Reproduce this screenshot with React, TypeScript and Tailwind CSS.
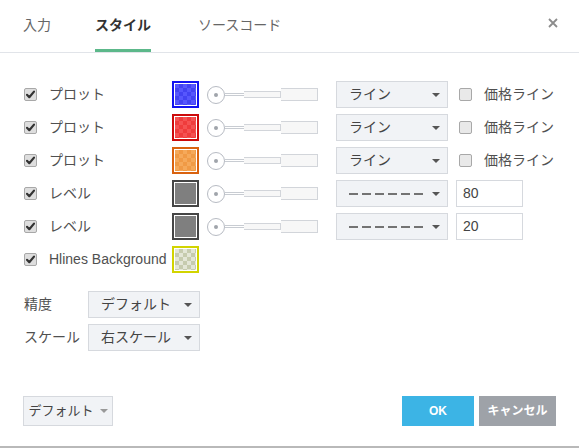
import React from "react";

const FONT = "font-['Liberation_Sans','Noto_Sans_CJK_JP',sans-serif]";

type Row = {
  label: string;
  swatch: string;
  kind: "plot" | "level";
  value?: string;
};

const rows: Row[] = [
  {
    label: "プロット",
    kind: "plot",
    swatch:
      "border-[#1212f0] bg-[conic-gradient(#4343f2_25%,#5757fd_0_50%,#4343f2_0_75%,#5757fd_0)]",
  },
  {
    label: "プロット",
    kind: "plot",
    swatch:
      "border-[#cc0a0a] bg-[conic-gradient(#ef3c3c_25%,#f55252_0_50%,#ef3c3c_0_75%,#f55252_0)]",
  },
  {
    label: "プロット",
    kind: "plot",
    swatch:
      "border-[#d9620f] bg-[conic-gradient(#f09a45_25%,#f5a95a_0_50%,#f09a45_0_75%,#f5a95a_0)]",
  },
  { label: "レベル", kind: "level", value: "80", swatch: "border-[#454545] bg-[#7f7f7f]" },
  { label: "レベル", kind: "level", value: "20", swatch: "border-[#454545] bg-[#7f7f7f]" },
];

function Checkbox({ checked }: { checked: boolean }) {
  return (
    <div
      className={`w-[13px] h-[13px] shrink-0 rounded-[2px] border border-[#a8a8a8] flex items-center justify-center ${
        checked ? "bg-[#dedede]" : "bg-[#e9e9e9]"
      }`}
    >
      {checked && (
        <svg width="9" height="9" viewBox="0 0 9 9">
          <path d="M1 4.8 L3.3 7.2 L8 1.6" fill="none" stroke="#333" strokeWidth="2.2" strokeLinecap="round" strokeLinejoin="round" />
        </svg>
      )}
    </div>
  );
}

function Swatch({ cls }: { cls: string }) {
  return (
    <div className={`w-[27px] h-[27px] shrink-0 border-2 p-px bg-white ${cls.split(" ")[0]}`}>
      <div className={`w-full h-full bg-[length:8px_8px] ${cls.split(" ").slice(1).join(" ")}`} />
    </div>
  );
}

function Slider() {
  return (
    <div className="flex items-center w-[111px] shrink-0">
      <div className="w-[18px] h-[18px] shrink-0 rounded-full border border-[#b7bbc3] bg-white flex items-center justify-center">
        <div className="w-[4px] h-[4px] rounded-full bg-[#a0a4ab]" />
      </div>
      <div className="w-[19px] shrink-0 h-[3px] border-y border-[#c8ccd2] bg-white" />
      <div className="w-[37px] shrink-0 h-[7px] border border-l-0 border-[#d2d5da] bg-[#f7f7f7]" />
      <div className="w-[37px] shrink-0 h-[13px] border border-l-0 border-[#d2d5da] bg-[#f7f7f7]" />
    </div>
  );
}

function Caret({ color = "border-t-[#555]" }: { color?: string }) {
  return <div className={`w-0 h-0 border-x-[4px] border-x-transparent border-t-[4px] ${color}`} />;
}

function Select({ children, w = "w-[112px]" }: { children: React.ReactNode; w?: string }) {
  return (
    <div
      className={`${w} h-[27px] shrink-0 bg-[#f1f3f6] border border-[#d6d9de] flex items-center justify-between pl-[12px] pr-[7px] text-[14px] text-[#444]`}
    >
      {children}
      <Caret />
    </div>
  );
}

function Dashes() {
  return (
    <div className="flex gap-[4px]">
      {[0, 1, 2, 3, 4, 5].map((i) => (
        <span key={i} className="w-[9px] h-[2px] bg-[#737373]" />
      ))}
    </div>
  );
}

export default function App() {
  return (
    <div className={`w-[579px] h-[448px] bg-white flex flex-col ${FONT} text-[#505050] border-b-2 border-[#b9b9b9]`}>
      {/* header tabs */}
      <div className="h-[53px] shrink-0 flex items-stretch border-b border-[#e1e4e9] pl-[23px] pr-[21px] text-[14px]">
        <div className="flex items-center pt-[1px] border-b-[3px] border-transparent text-[#666]">入力</div>
        <div className="flex items-center pt-[1px] ml-[44px] border-b-[3px] border-[#5cb88a] font-bold text-[#333]">
          スタイル
        </div>
        <div className="flex items-center pt-[1px] ml-[47px] border-b-[3px] border-transparent text-[#666]">
          ソースコード
        </div>
        <div className="ml-auto flex items-center pb-[7px]">
          <svg width="10" height="10" viewBox="0 0 10 10">
            <path d="M1 1 L9 9 M9 1 L1 9" stroke="#8c8c8c" strokeWidth="1.8" />
          </svg>
        </div>
      </div>

      {/* rows */}
      <div className="pt-[28px] pl-[24px] flex flex-col gap-[6px] text-[14px]">
        {rows.map((r, i) => (
          <div key={i} className="h-[27px] flex items-center">
            <Checkbox checked />
            <div className="ml-[12px] w-[123px] whitespace-nowrap">{r.label}</div>
            <Swatch cls={r.swatch} />
            <div className="ml-[8px]">
              <Slider />
            </div>
            <div className="ml-[18px]">
              <Select>{r.kind === "plot" ? <span>ライン</span> : <Dashes />}</Select>
            </div>
            {r.kind === "plot" ? (
              <div className="ml-[11px] flex items-center">
                <Checkbox checked={false} />
                <span className="ml-[12px] whitespace-nowrap">価格ライン</span>
              </div>
            ) : (
              <div className="ml-[8px] w-[67px] h-[27px] border border-[#d6d9de] bg-white flex items-center pl-[6px] text-[#444]">
                {r.value}
              </div>
            )}
          </div>
        ))}
        <div className="h-[27px] flex items-center">
          <Checkbox checked />
          <div className="ml-[12px] w-[123px] whitespace-nowrap">Hlines Background</div>
          <Swatch cls="border-[#d2d400] bg-[conic-gradient(#c6cbae_25%,#e3e6d6_0_50%,#c6cbae_0_75%,#e3e6d6_0)]" />
        </div>

        <div className="mt-[12px] h-[27px] flex items-center">
          <div className="w-[64px]">精度</div>
          <Select>
            <span>デフォルト</span>
          </Select>
        </div>
        <div className="h-[27px] flex items-center">
          <div className="w-[64px] whitespace-nowrap">スケール</div>
          <Select>
            <span>右スケール</span>
          </Select>
        </div>
      </div>

      {/* footer */}
      <div className="mt-auto mb-[20px] px-[23px] flex items-center">
        <div className="w-[90px] h-[30px] bg-[#f1f3f6] border border-[#d6d9de] flex items-center justify-center gap-[6px] text-[13px] text-[#444]">
          <span>デフォルト</span>
          <Caret color="border-t-[#999]" />
        </div>
        <div className="ml-auto flex gap-[5px]">
          <div className="w-[72px] h-[30px] bg-[#3cb4e5] text-white font-bold text-[12px] flex items-center justify-center">
            OK
          </div>
          <div className="w-[77px] h-[30px] bg-[#9ea2a8] text-white font-bold text-[12px] flex items-center justify-center">
            キャンセル
          </div>
        </div>
      </div>
    </div>
  );
}
